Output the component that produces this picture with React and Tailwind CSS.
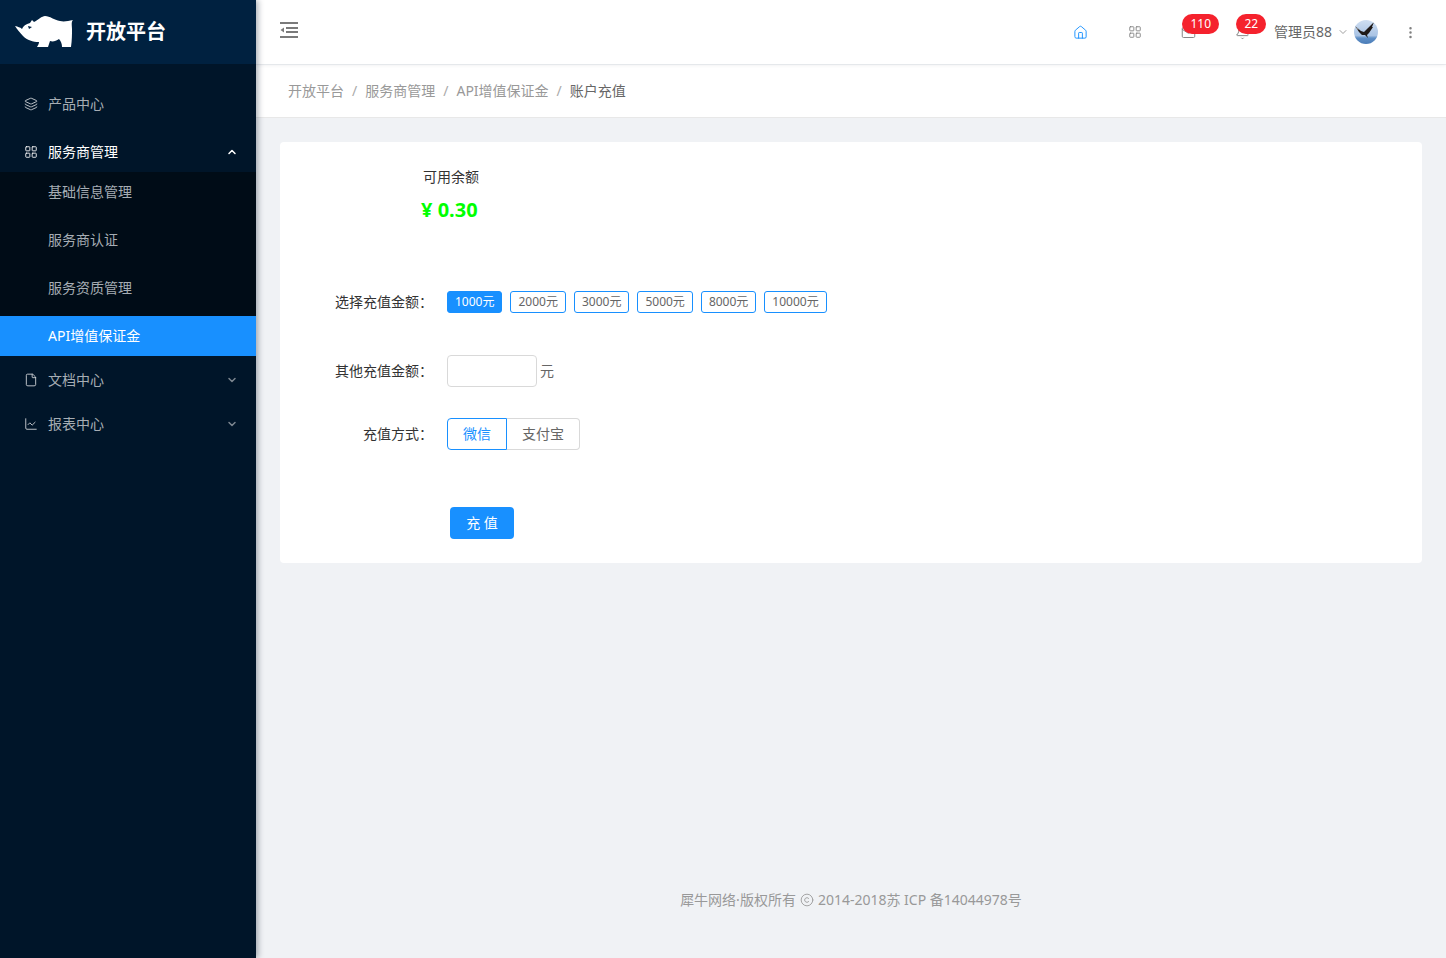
import { ChevronDown, ChevronUp, Copyright, EllipsisVertical, File, Home, Layers, LayoutGrid, Mail, Bell, LineChart } from 'lucide-react';

const FONT = 'font-["Noto_Sans","Noto_Sans_CJK_SC",sans-serif]';

function RhinoLogo() {
  return (
    <svg width="58" height="32" viewBox="0 0 58 32" className="shrink-0">
      <path
        fill="#fff"
        d="M0 10c3 1 5 1 7 3 1-3 4-5 8-6l2-3 2 2c4-2 8-6 11-6 5 0 9 4 15 5 4 1 8 0 13-1-2 2-1 5-1 9 0 5 0 11-1 18l-9 0c0-3-1-6-3-8-3 2-6 3-9 2l-2 6-11 0c1-2 2-3 2-5-6 0-12-2-16-6-3-3-6-7-8-10z"
      />
      <path fill="#002140" d="M13 10l4 1-3 2z" />
    </svg>
  );
}

function Avatar() {
  return (
    <svg width="24" height="24" viewBox="0 0 24 24" className="rounded-full shrink-0">
      <defs>
        <linearGradient id="sky" x1="0" y1="0" x2="0" y2="1">
          <stop offset="0" stopColor="#cfdff2" />
          <stop offset="0.65" stopColor="#a9c3e4" />
          <stop offset="0.75" stopColor="#5f8fc6" />
          <stop offset="1" stopColor="#4a7cb8" />
        </linearGradient>
      </defs>
      <rect width="24" height="24" fill="url(#sky)" />
      <path fill="#1f1a18" d="M1 6l6 5 3 1 4-4 6-6-2 5 1 0-4 6-2 2 1 3-3-3-3 0-3-3z" />
      <path fill="#e8e4dc" d="M2 7l3 3-2-1z" />
    </svg>
  );
}

function MenuItem({ icon: Icon, label, arrow, active }) {
  return (
    <div className={`mt-1 mb-2 flex h-10 items-center pl-6 pr-[18px] text-sm ${active ? 'text-white' : 'text-[#a6adb4]'}`}>
      <Icon size={14} strokeWidth={1.5} className={`mr-[10px] shrink-0 ${active ? 'text-white' : 'text-[#d5d8dc]'}`} />
      <span className="flex-1">{label}</span>
      {arrow === 'up' && <ChevronUp size={12} strokeWidth={3} className="text-white" />}
      {arrow === 'down' && <ChevronDown size={12} strokeWidth={3} className="text-[#7b858f]" />}
    </div>
  );
}

function SubItem({ label, active }) {
  return (
    <div className={`mt-1 mb-2 flex h-10 items-center pl-12 text-sm last:mb-1 ${active ? 'bg-[#1890ff] text-white' : 'text-[#a6adb4]'}`}>
      {label}
    </div>
  );
}

function Sidebar() {
  return (
    <aside className="relative z-10 flex w-[256px] shrink-0 flex-col bg-[#001529] shadow-[2px_0_6px_rgba(0,21,41,0.35)]">
      <div className="flex h-16 items-center gap-[13px] bg-[#002140] pl-[15px]">
        <RhinoLogo />
        <span className="text-xl font-bold text-white">开放平台</span>
      </div>
      <nav className="pt-4">
        <MenuItem icon={Layers} label="产品中心" />
        <div className="-mb-2">
          <MenuItem icon={LayoutGrid} label="服务商管理" arrow="up" active />
        </div>
        <div className="mt-0 bg-[#000c17]">
          <SubItem label="基础信息管理" />
          <SubItem label="服务商认证" />
          <SubItem label="服务资质管理" />
          <SubItem label="API增值保证金" active />
        </div>
        <div className="-mb-1">
          <MenuItem icon={File} label="文档中心" arrow="down" />
        </div>
        <MenuItem icon={LineChart} label="报表中心" arrow="down" />
      </nav>
    </aside>
  );
}

function CountBadge({ children, className }) {
  return (
    <span className={`absolute top-[-11px] flex h-5 items-center rounded-full bg-[#f5222d] px-2 text-xs leading-none text-white ${className}`}>
      {children}
    </span>
  );
}

function Header() {
  return (
    <header className="relative z-[1] flex h-16 shrink-0 items-center bg-white pl-6 pr-6 shadow-[0_1px_4px_rgba(0,21,41,0.08)]">
      <svg width="18" height="16" viewBox="0 0 18 16" className="mb-[4px] text-[#7a7a7a]">
        <path fill="currentColor" d="M0 0h18v2H0zM6 5h12v2H6zM6 9h12v2H6zM0 14h18v2H0zM4 5.5v5L0.5 8z" />
      </svg>
      <div className="ml-auto flex items-center text-[#7f7f7f]">
        <div className="flex w-[54px] justify-center"><Home size={15} strokeWidth={1.5} className="text-[#1890ff]" /></div>
        <div className="flex w-[54px] justify-center"><LayoutGrid size={14} strokeWidth={1.5} /></div>
        <div className="flex w-[54px] justify-center">
          <div className="relative">
            <Mail size={15} strokeWidth={1.5} />
            <CountBadge className="left-[1px]">110</CountBadge>
          </div>
        </div>
        <div className="flex w-[54px] justify-center">
          <div className="relative">
            <Bell size={15} strokeWidth={1.5} />
            <CountBadge className="left-[1px]">22</CountBadge>
          </div>
        </div>
        <span className="ml-1 text-sm text-[#666]">管理员88</span>
        <ChevronDown size={12} strokeWidth={1.5} className="ml-[5px]" />
        <div className="ml-[5px]"><Avatar /></div>
        <div className="ml-[20px] flex w-[24px] justify-center"><EllipsisVertical size={15} strokeWidth={2} /></div>
      </div>
    </header>
  );
}

function Breadcrumb() {
  const trail = ['开放平台', '服务商管理', 'API增值保证金'];
  return (
    <div className="flex h-[53px] shrink-0 items-center border-b border-[#e8e8e8] bg-white pl-8 text-sm text-[#999]">
      {trail.map((t) => (
        <span key={t}>
          {t}
          <span className="mx-2 text-[#aaa]">/</span>
        </span>
      ))}
      <span className="text-[#666]">账户充值</span>
    </div>
  );
}

const AMOUNTS = ['1000元', '2000元', '3000元', '5000元', '8000元', '10000元'];

function FormRow({ label, className, children }) {
  return (
    <div className={`flex items-center ${className}`}>
      <label className="w-[160px] pr-[7px] text-right text-sm text-[#333]">{label}：</label>
      <div className="ml-[7px] flex items-center">{children}</div>
    </div>
  );
}

function Recharge() {
  return (
    <section className="mx-6 mt-6 h-[421px] rounded-sm bg-white">
      <div className="pl-[143px] pt-[25px] text-sm leading-5 text-[#333]">可用余额</div>
      <div className="mt-[9px] pl-[141px] text-xl font-bold leading-7 text-[#00ff00]">¥ 0.30</div>

      <FormRow label="选择充值金额" className="mt-[67px]">
        <div className="flex gap-2">
          {AMOUNTS.map((a, i) => (
            <button
              key={a}
              type="button"
              className={`flex h-[22px] items-center rounded-[3px] border border-[#1890ff] px-[7px] text-xs ${i === 0 ? 'bg-[#1890ff] text-white' : 'bg-white text-[#666]'}`}
            >
              {a}
            </button>
          ))}
        </div>
      </FormRow>

      <FormRow label="其他充值金额" className="mt-[42px]">
        <input type="text" className="h-8 w-[90px] rounded border border-[#d9d9d9] bg-white px-2 outline-none" />
        <span className="ml-[3px] text-sm text-[#666]">元</span>
      </FormRow>

      <FormRow label="充值方式" className="mt-[31px]">
        <div className="flex h-8 text-sm">
          <span className="flex w-[60px] items-center justify-center rounded-l border border-[#1890ff] text-[#1890ff]">微信</span>
          <span className="flex w-[73px] items-center justify-center rounded-r border border-l-0 border-[#d9d9d9] text-[#666]">支付宝</span>
        </div>
      </FormRow>

      <button type="button" className="ml-[170px] mt-[57px] block h-8 w-16 rounded bg-[#1890ff] text-sm text-white">充 值</button>
    </section>
  );
}

export default function App() {
  return (
    <div className={`flex min-h-[958px] bg-[#f0f2f5] ${FONT}`}>
      <Sidebar />
      <div className="flex min-w-0 flex-1 flex-col">
        <Header />
        <div className="mt-px"><Breadcrumb /></div>
        <main className="flex flex-1 flex-col">
          <Recharge />
          <footer className="mt-auto flex h-[68px] items-start justify-center pt-[0px] text-sm leading-5 text-[#999]">
            犀牛网络·版权所有
            <Copyright size={14} strokeWidth={1.5} className="mx-1 mt-[3px]" />
            2014-2018苏 ICP 备14044978号
          </footer>
        </main>
      </div>
    </div>
  );
}
